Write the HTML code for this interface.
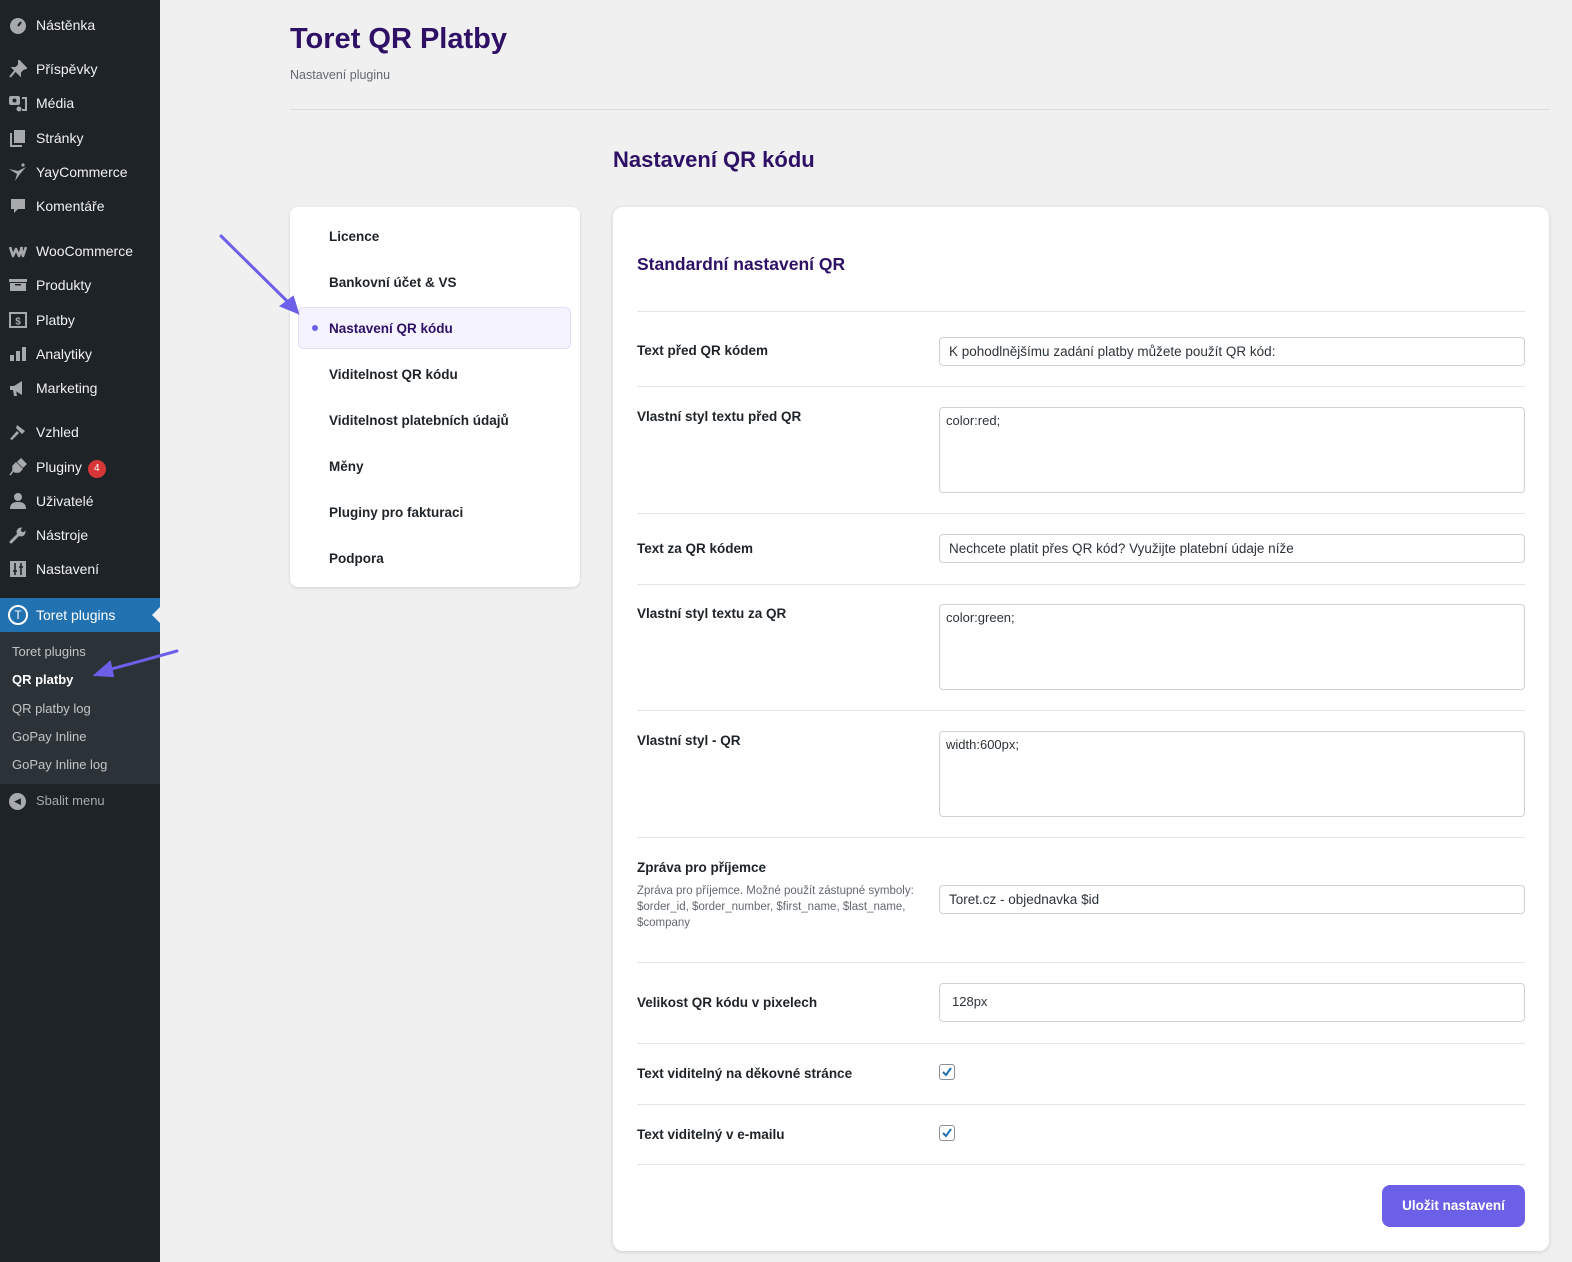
<!DOCTYPE html>
<html><head><meta charset="utf-8">
<style>
*{box-sizing:border-box;margin:0;padding:0}
body{width:1572px;height:1262px;background:#f0f0f1;font-family:"Liberation Sans",sans-serif;position:relative;overflow:hidden;color:#1d2327}
.abs{position:absolute}
#side{left:0;top:0;width:160px;height:1262px;background:#1d2327}
.mi{position:absolute;left:0;width:160px;height:34px;color:#f0f0f1;font-size:14px;line-height:34px;padding-left:36px}
.ic{position:absolute;left:9px;top:8px;width:18px;height:18px}
.sub{position:absolute;left:12px;font-size:13px;color:#c3c4c7}
.lab{position:absolute;left:637px;font-size:13.5px;font-weight:bold;color:#1d2327}
.sep{position:absolute;left:637px;width:888px;height:1px;background:#e5e5e5}
.inp{position:absolute;left:939px;width:586px;border:1px solid #d0d0d7;border-radius:4px;background:#fff;font-size:13.5px;color:#2c3338;padding-left:9px}
.nav{position:absolute;left:329px;font-size:13.5px;font-weight:bold;color:#1d2327}
.cb{position:absolute;left:939px;width:16px;height:16px;border:1px solid #8c8f94;border-radius:3px;background:#fff}
</style></head><body>
<div id="side" class="abs">
 <div class="mi" style="top:8px"><svg class="ic" viewBox="0 0 18 18"><circle cx="9" cy="10" r="8" fill="#a7aaad"/><path d="M9 10l3-4" stroke="#1d2327" stroke-width="2"/></svg>Nástěnka</div>
 <div class="mi" style="top:52px"><svg class="ic" viewBox="0 0 18 18"><path d="M10 1l7 7-3 1-3 3 0 3-7-7 3 0 3-3z M6 11l-5 6" fill="#a7aaad" stroke="#a7aaad" stroke-width="2"/></svg>Příspěvky</div>
 <div class="mi" style="top:86px"><svg class="ic" viewBox="0 0 18 18"><rect x="0" y="2" width="11" height="9" rx="2" fill="#a7aaad"/><circle cx="5.5" cy="6.5" r="2" fill="#1d2327"/><path d="M13 4h4v12h-4" stroke="#a7aaad" stroke-width="2" fill="none"/><circle cx="10" cy="15" r="2.5" fill="#a7aaad"/></svg>Média</div>
 <div class="mi" style="top:121px"><svg class="ic" viewBox="0 0 18 18"><path d="M2 4v13h11" stroke="#a7aaad" stroke-width="2" fill="none"/><rect x="5" y="1" width="11" height="13" fill="#a7aaad"/></svg>Stránky</div>
 <div class="mi" style="top:155px"><svg class="ic" viewBox="0 0 18 18"><circle cx="14" cy="2" r="1.6" fill="#a7aaad"/><path d="M0 6l9 2 8-4-6 7-5 7 2-7z" fill="#a7aaad"/></svg>YayCommerce</div>
 <div class="mi" style="top:189px"><svg class="ic" viewBox="0 0 18 18"><path d="M2 2h14v10H9l-4 4v-4H2z" fill="#a7aaad"/></svg>Komentáře</div>
 <div class="mi" style="top:234px"><svg class="ic" viewBox="0 0 18 18"><path d="M1 5l3 9 3-7 3 7 3-9M12 5l2 9 3-9" stroke="#a7aaad" stroke-width="2.6" fill="none" stroke-linejoin="round"/></svg>WooCommerce</div>
 <div class="mi" style="top:268px"><svg class="ic" viewBox="0 0 18 18"><rect x="0" y="3" width="18" height="3" fill="#a7aaad"/><rect x="1" y="7" width="16" height="8" fill="#a7aaad"/><rect x="6" y="8" width="6" height="1.5" fill="#1d2327"/></svg>Produkty</div>
 <div class="mi" style="top:303px"><svg class="ic" viewBox="0 0 18 18"><rect x="1" y="2" width="16" height="14" stroke="#a7aaad" stroke-width="2" fill="none"/><text x="9" y="13.5" font-size="10" font-weight="bold" fill="#a7aaad" text-anchor="middle" font-family="Liberation Sans">$</text></svg>Platby</div>
 <div class="mi" style="top:337px"><svg class="ic" viewBox="0 0 18 18"><rect x="1" y="10" width="4" height="6" fill="#a7aaad"/><rect x="7" y="6" width="4" height="10" fill="#a7aaad"/><rect x="13" y="2" width="4" height="14" fill="#a7aaad"/></svg>Analytiky</div>
 <div class="mi" style="top:371px"><svg class="ic" viewBox="0 0 18 18"><path d="M1 7h4l8-5v14l-8-5H1z" fill="#a7aaad"/><path d="M4 11l1 6h3l-1-6" fill="#a7aaad"/></svg>Marketing</div>
 <div class="mi" style="top:415px"><svg class="ic" viewBox="0 0 18 18"><path d="M8 2l8 6-3 3-6-6zM8 8l-7 8 2 1 7-7" fill="#a7aaad"/></svg>Vzhled</div>
 <div class="mi" style="top:450px"><svg class="ic" viewBox="0 0 18 18"><path d="M12 1l5 5-3 3-5-5zM7 5l6 6-3 3H6l-2-2V8zM4 13l-3 4" fill="#a7aaad" stroke="#a7aaad" stroke-width="1.5"/></svg>Pluginy <span style="display:inline-block;background:#d63638;color:#fff;border-radius:9px;width:18px;height:18px;font-size:10px;line-height:18px;text-align:center;vertical-align:1px;margin-left:2px">4</span></div>
 <div class="mi" style="top:484px"><svg class="ic" viewBox="0 0 18 18"><circle cx="9" cy="5" r="4" fill="#a7aaad"/><path d="M1 17c0-6 4-7 8-7s8 1 8 7z" fill="#a7aaad"/></svg>Uživatelé</div>
 <div class="mi" style="top:518px"><svg class="ic" viewBox="0 0 18 18"><path d="M2 16l8-8" stroke="#a7aaad" stroke-width="3" stroke-linecap="round"/><circle cx="12" cy="6" r="4.5" fill="#a7aaad"/><circle cx="14" cy="4" r="2" fill="#1d2327"/></svg>Nástroje</div>
 <div class="mi" style="top:552px"><svg class="ic" viewBox="0 0 18 18"><rect x="1" y="1" width="16" height="16" fill="#a7aaad"/><path d="M6 3v12M12 3v12M4 11h4M10 7h4" stroke="#1d2327" stroke-width="1.6"/></svg>Nastavení</div>
 <div class="abs" style="left:0;top:598px;width:160px;height:34px;background:#2271b1"></div>
 <div class="abs" style="left:152px;top:607px;width:0;height:0;border-top:8px solid transparent;border-bottom:8px solid transparent;border-right:8px solid #f0f0f1"></div>
 <div class="mi" style="top:598px;color:#fff"><span class="abs" style="left:8px;top:7px;width:20px;height:20px;border:2px solid #fff;border-radius:50%;color:#fff;font-size:12px;line-height:16px;text-align:center">T</span>Toret plugins</div>
 <div class="abs" style="left:0;top:632px;width:160px;height:152px;background:#2c3338"></div>
 <div class="sub" style="top:644px">Toret plugins</div>
 <div class="sub" style="top:672px;color:#fff;font-weight:bold">QR platby</div>
 <div class="sub" style="top:701px">QR platby log</div>
 <div class="sub" style="top:729px">GoPay Inline</div>
 <div class="sub" style="top:757px">GoPay Inline log</div>
 <div class="mi" style="top:784px;color:#a7aaad;font-size:13px"><span class="abs" style="left:9px;top:9px;width:17px;height:17px;border-radius:50%;background:#a7aaad;color:#1d2327;font-size:9px;line-height:17px;text-align:center">◀</span>Sbalit menu</div>
</div>

<div class="abs" style="left:290px;top:23px;font-size:29px;font-weight:bold;color:#2e1065">Toret QR Platby</div>
<div class="abs" style="left:290px;top:68px;font-size:12.5px;color:#646970">Nastavení pluginu</div>
<div class="abs" style="left:290px;top:109px;width:1260px;height:1px;background:#dcdcde"></div>
<div class="abs" style="left:613px;top:147px;font-size:22px;font-weight:bold;color:#2e1065">Nastavení QR kódu</div>

<div class="abs" style="left:290px;top:207px;width:290px;height:380px;background:#fff;border-radius:8px;box-shadow:0 1px 3px rgba(0,0,0,.12)"></div>
<div class="abs" style="left:298px;top:307px;width:273px;height:42px;background:#f5f3ff;border:1px solid #e3dcfb;border-radius:6px"></div>
<div class="abs" style="left:312px;top:325px;width:6px;height:6px;border-radius:50%;background:#6c5fe8"></div>
<div class="nav" style="top:229px">Licence</div>
<div class="nav" style="top:275px">Bankovní účet &amp; VS</div>
<div class="nav" style="top:321px;color:#2e1065">Nastavení QR kódu</div>
<div class="nav" style="top:367px">Viditelnost QR kódu</div>
<div class="nav" style="top:413px">Viditelnost platebních údajů</div>
<div class="nav" style="top:459px">Měny</div>
<div class="nav" style="top:505px">Pluginy pro fakturaci</div>
<div class="nav" style="top:551px">Podpora</div>

<svg class="abs" style="left:0;top:0" width="600" height="700">
<g stroke="#6c5fe8" stroke-width="3" fill="#6c5fe8" stroke-linecap="round">
<line x1="221" y1="236" x2="292" y2="306"/>
<polygon points="298,313 281,306 293,297" stroke-width="2"/>
<line x1="177" y1="651" x2="108" y2="670"/>
<polygon points="95,675 110,662 113,676" stroke-width="2"/>
</g></svg>

<div class="abs" style="left:613px;top:207px;width:936px;height:1044px;background:#fff;border-radius:10px;box-shadow:0 1px 4px rgba(0,0,0,.15)"></div>
<div class="abs" style="left:637px;top:254px;font-size:17.5px;font-weight:bold;color:#2e1065">Standardní nastavení QR</div>
<div class="sep" style="top:311px"></div>
<div class="lab" style="top:343px">Text před QR kódem</div>
<div class="inp" style="top:337px;height:29px;line-height:27px">K pohodlnějšímu zadání platby můžete použít QR kód:</div>
<div class="sep" style="top:386px"></div>
<div class="lab" style="top:409px">Vlastní styl textu před QR</div>
<div class="inp" style="top:407px;height:86px;padding:5px 6px;font-size:13px">color:red;</div>
<div class="sep" style="top:513px"></div>
<div class="lab" style="top:541px">Text za QR kódem</div>
<div class="inp" style="top:534px;height:29px;line-height:27px">Nechcete platit přes QR kód? Využijte platební údaje níže</div>
<div class="sep" style="top:584px"></div>
<div class="lab" style="top:606px">Vlastní styl textu za QR</div>
<div class="inp" style="top:604px;height:86px;padding:5px 6px;font-size:13px">color:green;</div>
<div class="sep" style="top:710px"></div>
<div class="lab" style="top:733px">Vlastní styl - QR</div>
<div class="inp" style="top:731px;height:86px;padding:5px 6px;font-size:13px">width:600px;</div>
<div class="sep" style="top:837px"></div>
<div class="lab" style="top:860px">Zpráva pro příjemce</div>
<div class="abs" style="left:637px;top:883px;width:295px;font-size:11.5px;line-height:16px;color:#646970">Zpráva pro příjemce. Možné použít zástupné symboly: $order_id, $order_number, $first_name, $last_name, $company</div>
<div class="inp" style="top:885px;height:29px;line-height:27px">Toret.cz - objednavka $id</div>
<div class="sep" style="top:962px"></div>
<div class="lab" style="top:995px">Velikost QR kódu v pixelech</div>
<div class="inp" style="top:983px;height:39px;line-height:36px;padding-left:12px;font-size:13px">128px</div>
<div class="sep" style="top:1043px"></div>
<div class="lab" style="top:1066px">Text viditelný na děkovné stránce</div>
<div class="cb" style="top:1064px"><svg width="14" height="14" style="position:absolute;left:0;top:0"><path d="M3 7l3 3 5-7" stroke="#2271b1" stroke-width="2" fill="none"/></svg></div>
<div class="sep" style="top:1104px"></div>
<div class="lab" style="top:1127px">Text viditelný v e-mailu</div>
<div class="cb" style="top:1125px"><svg width="14" height="14" style="position:absolute;left:0;top:0"><path d="M3 7l3 3 5-7" stroke="#2271b1" stroke-width="2" fill="none"/></svg></div>
<div class="sep" style="top:1164px"></div>
<div class="abs" style="left:1382px;top:1185px;width:143px;height:42px;background:#6c5fe8;border-radius:8px;color:#fff;font-size:13.5px;font-weight:bold;text-align:center;line-height:42px">Uložit nastavení</div>
</body></html>
